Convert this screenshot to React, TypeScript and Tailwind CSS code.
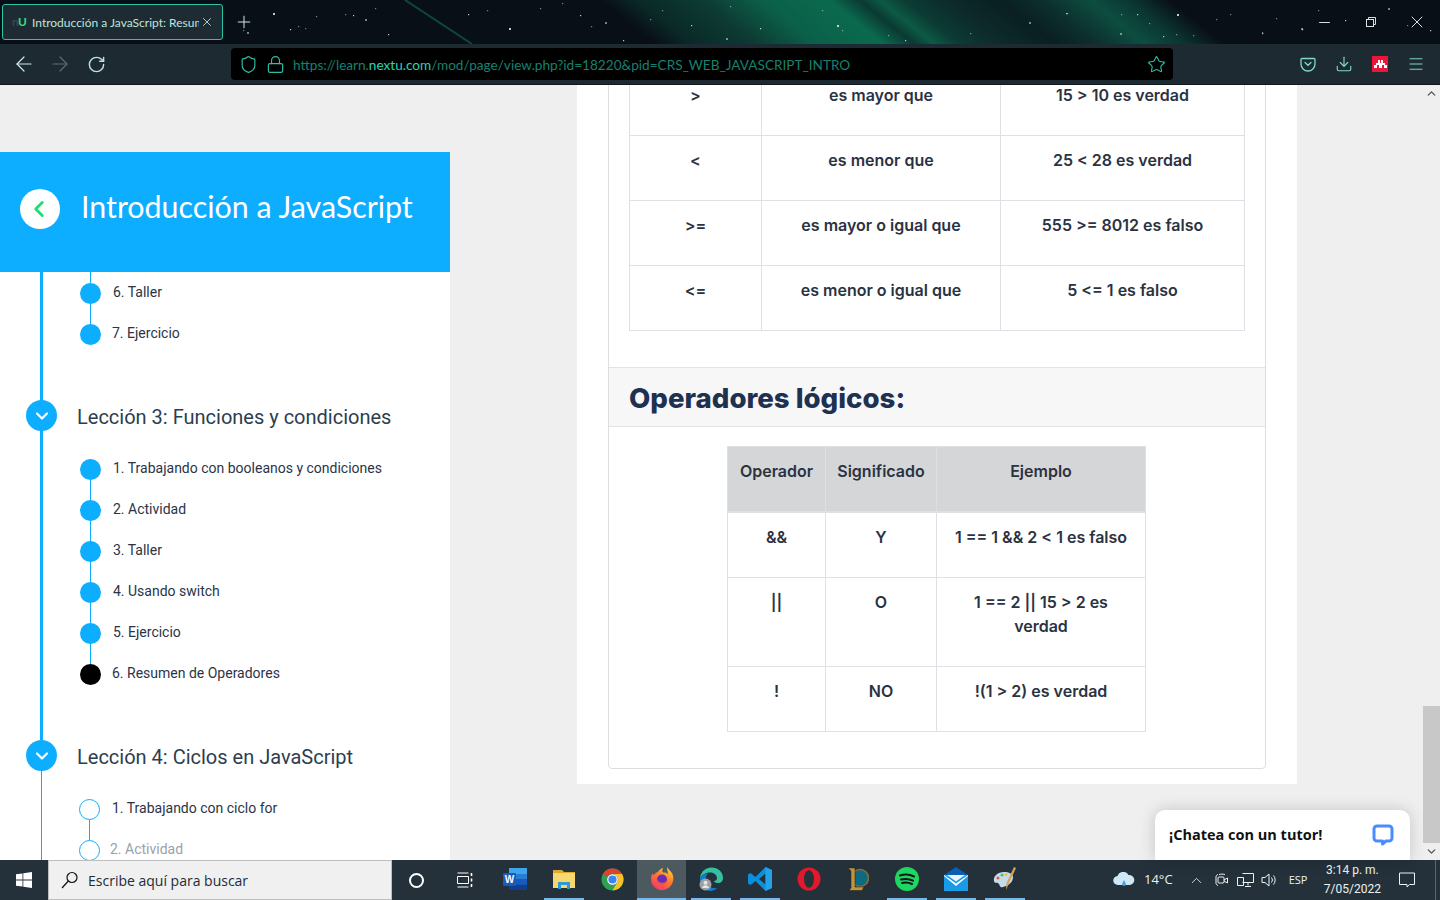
import { ArrowLeft, ArrowRight, ChevronDown, ChevronLeft, ChevronUp, Download, Lock, Menu, Minus, Plus, RotateCw, Shield, Star, X } from "lucide-react";

const stars: number[][] = [
  [273, 13], [316, 16], [345, 14], [353, 15], [375, 8], [365, 19], [290, 29], [298, 26], [305, 28], [388, 34], [247, 32], [243, 30],
  [468, 14], [487, 10], [491, 44], [509, 28], [540, 8], [562, 3], [580, 15], [591, 26], [605, 22], [623, 40], [650, 19], [662, 10],
  [691, 25], [726, 38], [730, 6], [760, 28], [780, 45], [822, 10], [837, 25], [842, 30], [888, 35], [905, 40], [970, 33], [1029, 22],
  [1066, 13], [1067, 13], [1121, 14], [1137, 14], [1120, 33], [1149, 23], [1163, 36], [1176, 34], [1193, 35], [1177, 14], [1216, 19],
  [1230, 14], [1262, 33], [1276, 18], [1301, 28], [1302, 29], [1262, 32], [1318, 10], [1345, 20], [1388, 8], [1407, 25], [1430, 30],
];

const HeaderBackdrop = () => (
  <svg className="absolute inset-0 h-[44px] w-full" viewBox="0 0 1440 44" preserveAspectRatio="none">
    <defs>
      <linearGradient id="band" x1="0" y1="0" x2="1" y2="0">
        <stop offset="0" stopColor="#090f16" />
        <stop offset="0.07" stopColor="#0a2a28" />
        <stop offset="0.175" stopColor="#0d3a33" />
        <stop offset="0.28" stopColor="#0b5f48" />
        <stop offset="0.4" stopColor="#0a6a4e" />
        <stop offset="0.455" stopColor="#0a3a33" />
        <stop offset="0.49" stopColor="#0c5a44" />
        <stop offset="0.535" stopColor="#0b3b34" />
        <stop offset="0.61" stopColor="#0d2a2b" />
        <stop offset="0.7" stopColor="#0a1f22" />
        <stop offset="0.77" stopColor="#0c2e2c" />
        <stop offset="0.86" stopColor="#0d4d40" />
        <stop offset="0.93" stopColor="#0b3531" />
        <stop offset="1" stopColor="#090f16" />
      </linearGradient>
    </defs>
    <rect width="1440" height="44" fill="#090f16" />
    <g transform="skewX(51.3)">
      <rect x="600" y="0" width="570" height="44" fill="url(#band)" />
    </g>
    <line x1="405" y1="0" x2="472" y2="44" stroke="#0b4a3a" strokeWidth="2" />
    {stars.map(([x, y], i) => (
      <rect key={i} x={x} y={y} width={i % 5 === 0 ? 2 : 1.2} height={i % 5 === 0 ? 2 : 1.2} fill="#cfe3e0" opacity={i % 3 === 0 ? 0.9 : 0.55} />
    ))}
  </svg>
);

const PocketIcon = () => (
  <svg width="16" height="16" viewBox="0 0 16 16" fill="none" stroke="#7fd8cc" strokeWidth="1.3">
    <path d="M2 2.5h12a1 1 0 0 1 1 1V8a7 7 0 0 1-14 0V3.5a1 1 0 0 1 1-1Z" />
    <path d="M5 6.5 8 9.3l3-2.8" strokeLinecap="round" />
  </svg>
);

const BrowserChrome = () => (
  <div className="relative shrink-0 h-[85px]">
    <HeaderBackdrop />
    <div className="relative flex h-[44px] items-start">
      <div className="ml-[2px] mt-[4px] flex h-[36px] w-[221px] items-center rounded-[3px] border border-[#2ec4a9] bg-[#1e2b32] pl-[9px]">
        <span className="w-[20px] text-[12px] font-bold leading-none tracking-tighter [font-family:Lato,sans-serif]">
          <span className="text-[#3b4658]">n</span><span className="text-[#2fdc8c]">U</span>
        </span>
        <span className="mt-[1px] w-[167px] overflow-hidden whitespace-nowrap text-[12px] text-[#bfe3de] [font-family:Lato,sans-serif]">Introducción a JavaScript: Resumen</span>
        <X size={14} strokeWidth={1.5} className="ml-[1px] text-[#bfe3de]" />
      </div>
      <Plus size={20} strokeWidth={1.2} className="ml-[11px] mt-[12px] text-[#cfe6e2]" />
      <div className="ml-auto flex h-[44px] items-center text-[#d5e2e0]">
        <Minus size={17} strokeWidth={1.4} className="mr-[33px]" />
        <svg width="10" height="10" viewBox="0 0 10 10" fill="none" stroke="currentColor" className="mr-[31px]">
          <rect x="0.5" y="2.5" width="7" height="7" />
          <path d="M2.5 2.5v-2h7v7h-2" />
        </svg>
        <X size={20} strokeWidth={1.2} className="mr-[13px]" />
      </div>
    </div>
    <div className="relative flex h-[41px] items-center border-b border-[#11181d] bg-[#1e2a31]">
      <ArrowLeft size={24} strokeWidth={1.2} className="ml-[12px] text-[#c9ece6]" />
      <ArrowRight size={24} strokeWidth={1.2} className="ml-[12px] text-[#5b6d70]" />
      <RotateCw size={19} strokeWidth={1.8} className="ml-[15px] text-[#bce6df]" />
      <div className="ml-[125px] flex h-[32px] w-[942px] items-center rounded-[4px] bg-black pl-[8px] pr-[7px]">
        <Shield size={19} strokeWidth={1.5} className="text-[#2ebda6]" />
        <Lock size={19} strokeWidth={1.5} className="ml-[8px] text-[#2ebda6]" />
        <span className="ml-[8px] mt-[2px] whitespace-nowrap text-[13.6px] text-[#16806f] [font-family:Lato,sans-serif]">
          https://learn.<span className="text-[#2dd2b4]">nextu.com</span>/mod/page/view.php?id=18220&amp;pid=CRS_WEB_JAVASCRIPT_INTRO
        </span>
        <Star size={19} strokeWidth={1.4} className="ml-auto text-[#2ebda6]" />
      </div>
      <div className="ml-[127px]"><PocketIcon /></div>
      <Download size={18} strokeWidth={1.5} className="ml-[19px] text-[#7fd8cc]" />
      <div className="ml-[19px] flex h-[16px] w-[16px] items-center justify-center bg-[#e8173a]">
        <svg width="13" height="8" viewBox="0 0 13 8" fill="#fff"><path d="M0 8V5h2V3h2V0h2v3h1V0h2v3h2v2h2v3h-3V5H8v3H5V5H3v3Z" /></svg>
      </div>
      <Menu size={18} strokeWidth={1.3} className="ml-[19px] text-[#7fd8cc]" />
    </div>
  </div>
);

type Lesson = { label: string; kind: "done" | "current" | "todo"; x: string; faded?: boolean };

const Step = ({ item, top, bottom }: { item: Lesson; top: boolean; bottom: boolean }) => {
  const open = item.kind === "todo";
  return (
    <div className="flex h-[41px] shrink-0">
      <div className="flex w-[21px] flex-col items-center">
        <div className={top ? "h-[11px] w-px bg-[#0dadff]" : "h-[11px] w-px"} />
        {item.kind === "done" && <div className="h-[21px] w-[21px] shrink-0 rounded-full bg-[#0dadff]" />}
        {item.kind === "current" && <div className="h-[21px] w-[21px] shrink-0 rounded-full bg-black" />}
        {open && <div className="h-[21px] w-[21px] shrink-0 rounded-full border border-[#0dadff] bg-white" />}
        <div className={bottom ? "h-[9px] w-px bg-[#0dadff]" : "h-[9px] w-px"} />
      </div>
      <span className={`${item.x} h-[41px] whitespace-nowrap text-[14px] leading-[41px] ${item.faded ? "text-[#9aa1ab]" : "text-[#2b3447]"}`}>{item.label}</span>
    </div>
  );
};

const LessonBullet = ({ className }: { className: string }) => (
  <div className={`flex h-[31px] w-[31px] shrink-0 items-center justify-center rounded-full bg-[#0dadff] ${className}`}>
    <ChevronDown size={20} strokeWidth={2.6} className="text-white" />
  </div>
);

const lesson3: Lesson[] = [
  { label: "1. Trabajando con booleanos y condiciones", kind: "done", x: "ml-[12px]" },
  { label: "2. Actividad", kind: "done", x: "ml-[12px]" },
  { label: "3. Taller", kind: "done", x: "ml-[12px]" },
  { label: "4. Usando switch", kind: "done", x: "ml-[12px]" },
  { label: "5. Ejercicio", kind: "done", x: "ml-[12px]" },
  { label: "6. Resumen de Operadores", kind: "current", x: "ml-[11px]" },
];

const Sidebar = () => (
  <div className="flex h-full w-[450px] shrink-0 flex-col">
    <div className="h-[67px] shrink-0" />
    <div className="flex h-[120px] shrink-0 items-center bg-[#0dadff] pb-[8px] pl-[20px]">
      <div className="mt-[2px] flex h-[40px] w-[40px] items-center justify-center rounded-full bg-white">
        <ChevronLeft size={26} strokeWidth={2.6} className="mr-[2px] text-[#1fdc76]" />
      </div>
      <h1 className="-mt-[3px] ml-[21px] whitespace-nowrap text-[30.4px] font-normal leading-none text-white [font-family:Lato,sans-serif]">Introducción a JavaScript</h1>
    </div>
    <div className="min-h-0 flex-1 overflow-hidden bg-white [font-family:Roboto,sans-serif]">
      <div className="ml-[40px] border-l-[3px] border-[#0dadff] pb-[46px]">
        <div className="ml-[37px] flex flex-col">
          <Step item={{ label: "6. Taller", kind: "done", x: "ml-[12px]" }} top bottom />
          <Step item={{ label: "7. Ejercicio", kind: "done", x: "ml-[11px]" }} top={true} bottom={false} />
        </div>
        <div className="mt-[46px] flex h-[31px] items-center">
          <LessonBullet className="-ml-[17px]" />
          <h2 className="ml-[20px] mt-[3px] whitespace-nowrap text-[20px] text-[#2c3e50]">Lección 3: Funciones y condiciones</h2>
        </div>
        <div className="ml-[37px] mt-[17px] flex flex-col">
          {lesson3.map((item, i) => (
            <Step key={item.label} item={item} top={i > 0} bottom={i < lesson3.length - 1} />
          ))}
        </div>
      </div>
      <div className="ml-[41px] border-l border-[#0dadff] pb-[40px]">
        <div className="flex h-[31px] items-center">
          <LessonBullet className="-ml-[16px]" />
          <h2 className="ml-[20px] mt-[3px] whitespace-nowrap text-[20px] text-[#2c3e50]">Lección 4: Ciclos en JavaScript</h2>
        </div>
        <div className="ml-[37px] mt-[17px] flex flex-col">
          <Step item={{ label: "1. Trabajando con ciclo for", kind: "todo", x: "ml-[12px]" }} top={false} bottom />
          <Step item={{ label: "2. Actividad", kind: "todo", x: "ml-[10px]", faded: true }} top bottom={false} />
        </div>
      </div>
    </div>
  </div>
);

const tdClass = "border border-[#dee0e5] pt-[12px] align-top text-center";

const comparisons = [
  [">", "es mayor que", "15 > 10 es verdad"],
  ["<", "es menor que", "25 < 28 es verdad"],
  [">=", "es mayor o igual que", "555 >= 8012 es falso"],
  ["<=", "es menor o igual que", "5 <= 1 es falso"],
];

const logic = [
  { cells: ["&&", "Y", "1 == 1 && 2 < 1 es falso"], h: "h-[66px]" },
  { cells: ["||", "O", "1 == 2 || 15 > 2 es verdad"], h: "h-[89px]" },
  { cells: ["!", "NO", "!(1 > 2) es verdad"], h: "h-[65px]" },
];

const Content = () => (
  <div className="h-full min-w-0 flex-1 overflow-hidden pl-[127px]">
    <div className="-mt-[16px] w-[720px] bg-white pb-[15px] pl-[31px]">
      <div className="w-[658px] rounded-b-[4px] border border-[#dedede] pb-[36px] text-[16px] font-semibold leading-[24px] text-[#2b3242] [font-family:Inter,sans-serif]">
        <table className="ml-[20px] w-[616px] table-fixed border-collapse">
          <colgroup>
            <col className="w-[132px]" />
            <col className="w-[239px]" />
            <col />
          </colgroup>
          <tbody>
            {comparisons.map((row) => (
              <tr key={row[0]} className="h-[65px]">
                {row.map((cell) => (
                  <td key={cell} className={tdClass}>{cell}</td>
                ))}
              </tr>
            ))}
          </tbody>
        </table>
        <div className="mt-[36px] flex h-[60px] items-center border-y border-[#e3e3e3] bg-[#f7f7f7] pl-[20px]">
          <h2 className="mt-[1px] text-[27.6px] font-extrabold text-[#1f3150]">Operadores lógicos:</h2>
        </div>
        <table className="ml-[118px] mt-[19px] w-[419px] table-fixed border-collapse">
          <colgroup>
            <col className="w-[98px]" />
            <col className="w-[111px]" />
            <col />
          </colgroup>
          <thead>
            <tr className="h-[65px] bg-[#d5d6d8]">
              {["Operador", "Significado", "Ejemplo"].map((h) => (
                <th key={h} className="border border-[#dee0e5] border-b-2 pt-[12px] align-top text-center font-semibold">{h}</th>
              ))}
            </tr>
          </thead>
          <tbody>
            {logic.map((row) => (
              <tr key={row.cells[0]} className={row.h}>
                {row.cells.map((cell) => (
                  <td key={cell} className={`${tdClass} px-[14px]`}>{cell}</td>
                ))}
              </tr>
            ))}
          </tbody>
        </table>
      </div>
    </div>
  </div>
);

const Scrollbar = () => (
  <div className="flex h-full w-[17px] shrink-0 flex-col bg-[#efefef]">
    <div className="flex h-[17px] items-center justify-center"><ChevronUp size={13} strokeWidth={2.5} className="text-[#555]" /></div>
    <div className="mt-[604px] h-[137px] bg-[#c8c8c8]" />
    <div className="flex h-[17px] items-center justify-center"><ChevronDown size={13} strokeWidth={2.5} className="text-[#555]" /></div>
  </div>
);

const ChatWidget = () => (
  <div className="absolute bottom-0 left-[1155px] flex h-[50px] w-[255px] items-center rounded-t-[10px] bg-white pl-[14px] pr-[16px] shadow-[0_0_16px_rgba(0,0,0,0.18)]">
    <span className="text-[14.5px] font-bold text-[#111] [font-family:'Open_Sans',sans-serif]">¡Chatea con un tutor!</span>
    <svg width="22" height="22" viewBox="0 0 22 22" fill="none" className="ml-auto">
      <path d="M5 2h12a3 3 0 0 1 3 3v9a3 3 0 0 1-3 3h-3l-3.5 3v-3H5a3 3 0 0 1-3-3V5a3 3 0 0 1 3-3Z" stroke="#4a8cff" strokeWidth="3" strokeLinejoin="round" />
    </svg>
  </div>
);

const Word = () => (
  <svg width="24" height="22" viewBox="0 0 24 22">
    <rect x="6" y="0" width="18" height="22" rx="1.5" fill="#2b7cd3" />
    <rect x="6" y="0" width="18" height="6" fill="#41a5ee" />
    <rect x="6" y="11" width="18" height="5.5" fill="#185abd" />
    <rect x="6" y="16.5" width="18" height="5.5" fill="#103f91" />
    <rect x="0" y="5" width="13" height="13" rx="1" fill="#185abd" />
    <text x="6.5" y="15" textAnchor="middle" fontSize="10" fontWeight="700" fill="#fff" fontFamily="Liberation Sans, sans-serif">W</text>
  </svg>
);
const Explorer = () => (
  <svg width="22" height="20" viewBox="0 0 22 20">
    <path d="M0 1h9l2 2h11v16H0Z" fill="#e0a92d" />
    <rect x="0" y="4" width="22" height="15" fill="#f7d770" />
    <path d="M5 20v-7h12v7h-3v-4H8v4Z" fill="#2c9ad8" />
  </svg>
);
const Chrome = () => (
  <svg width="23" height="23" viewBox="0 0 24 24">
    <circle cx="12" cy="12" r="11.500" fill="#2fa04f" />
    <path d="M2 6.300A11.500 11.500 0 0 1 22 6.300H12a5.700 5.700 0 0 0-5 3Z" fill="#e0412f" />
    <path d="M22 6.300A11.500 11.500 0 0 1 12 23.500L17 14.800A5.700 5.700 0 0 0 17 9 5.700 5.700 0 0 0 12 6.300Z" fill="#f7c02c" />
    <circle cx="12" cy="12" r="5.500" fill="#fff" />
    <circle cx="12" cy="12" r="4.300" fill="#3e84f1" />
  </svg>
);
const Firefox = () => (
  <svg width="24" height="24" viewBox="0 0 24 24">
    <defs>
      <linearGradient id="ff" x1="0.8" y1="0" x2="0.2" y2="1">
        <stop offset="0" stopColor="#ffd23a" />
        <stop offset="0.45" stopColor="#ff7a2b" />
        <stop offset="1" stopColor="#f0336f" />
      </linearGradient>
    </defs>
    <path d="M17 0c1 2 4 4 5.500 7 1.500 4 1 8-1.500 11.500A11 11 0 0 1 1 12c0-2 .5-4 1.500-5.500L4 8c1-2 3-3 4-3 1-2 3-3.500 5-4-1 2-1 3.500 0 4.500 2 0 4 0 5 2 0-2.500-1-5-1-7.500Z" fill="url(#ff)" />
    <circle cx="12" cy="12.500" r="5" fill="#6a2bb8" />
    <path d="M7 12c1 3 4 4.500 7 3.500 2-.5 3-2 3.500-3.500-.5 3-3 6-6.500 5.500C8.500 17 7 14.500 7 12Z" fill="#f4553f" />
  </svg>
);
const Edge = () => (
  <svg width="24" height="24" viewBox="0 0 24 24">
    <path d="M1 11C2 4 7 .5 12.500.5 19 .5 24 5 24 11c0 3-2 5-5 5-2.500 0-4-1-4-2 2 0 3-1 3-3 0-3-3-5.500-6.500-5.500C6 5.500 3 8 1 11Z" fill="#35c1a0" />
    <path d="M1 11c2-3 5-4.500 8-4.500-1.500 1.500-2.500 3.500-2.500 6 0 5 5 10 12 8.500A11.500 11.500 0 0 1 12 24C5 24 .5 18 1 11Z" fill="#0f7fd0" />
    <circle cx="6.500" cy="17.500" r="6" fill="#9aa0a4" />
    <circle cx="6.500" cy="15.800" r="2" fill="#e7e7e7" />
    <path d="M3 21c.5-2 2-2.800 3.500-2.800S9.500 19 10 21Z" fill="#e7e7e7" />
  </svg>
);
const VSCode = () => (
  <svg width="24" height="24" viewBox="0 0 24 24">
    <path d="M17.500 0 24 3v18l-6.500 3L7.500 14l-5 4L0 16.500v-9L2.500 6l5 4ZM17.500 6.500 11 12l6.500 5.500Z" fill="#0a8fdc" />
    <path d="M17.500 0 24 3v18l-6.500 3Z" fill="#2aa6ec" opacity="0.8" />
  </svg>
);
const Opera = () => (
  <svg width="24" height="24" viewBox="0 0 24 24">
    <circle cx="12" cy="12" r="11.500" fill="#e0192c" />
    <ellipse cx="12" cy="12" rx="5" ry="8.800" fill="#24323a" />
  </svg>
);
const LeagueIcon = () => (
  <svg width="22" height="24" viewBox="0 0 22 24">
    <circle cx="13" cy="11" r="8.500" fill="#0d6a80" stroke="#8a6d3b" strokeWidth="1.500" />
    <path d="M1 1h7v19h9l-2 3.500H2l2-2.500V4Z" fill="#c0953f" stroke="#1c1c1c" strokeWidth="0.500" />
  </svg>
);
const Spotify = () => (
  <svg width="24" height="24" viewBox="0 0 24 24" fill="none">
    <circle cx="12" cy="12" r="12" fill="#1ed760" />
    <path d="M5 8.500c4.500-1.300 10-1 14 1M6 12.500c4-1 8.500-.7 12 1.200M7 16c3.500-.8 7-.5 10 1" stroke="#11171a" strokeWidth="2" strokeLinecap="round" />
  </svg>
);
const Mail = () => (
  <svg width="24" height="24" viewBox="0 0 24 24">
    <path d="M0 8 12 0l12 8v3H0Z" fill="#0a5fb5" />
    <rect x="0" y="8" width="24" height="16" fill="#1a9be8" />
    <path d="M0 8l12 8.500L24 8v1L12 19 0 9Z" fill="#fff" />
    <path d="M3 8h18L12 14.500Z" fill="#e9f4fb" />
  </svg>
);
const Paint = () => (
  <svg width="24" height="24" viewBox="0 0 24 24">
    <path d="M11 5C5 5 0 9 1 14c.5 3 4 1 5 3s1 4 4 3c6-1.500 10-5 10-10 0-3-4-5-9-5Z" fill="#c7dcea" />
    <circle cx="5" cy="11" r="1.500" fill="#e2574c" />
    <circle cx="9" cy="8" r="1.500" fill="#5cb85c" />
    <circle cx="13" cy="7.500" r="1.500" fill="#f0c23c" />
    <path d="M21 0l2 1-7 15-3 7 .5-7Z" fill="#d8a25a" />
  </svg>
);

const TaskSlot = ({ children, running, active, className }: { children: React.ReactNode; running?: boolean; active?: boolean; className?: string }) => (
  <div className={`flex h-full w-[49px] shrink-0 flex-col items-center ${active ? "bg-[#4c5a60]" : ""} ${className ?? ""}`}>
    <div className="flex min-h-0 flex-1 items-center justify-center">{children}</div>
    <div className={`h-[2px] ${active ? "w-full" : "w-[40px]"} ${running ? "bg-[#76b9ed]" : ""}`} />
  </div>
);

const Taskbar = () => (
  <div className="flex h-[40px] shrink-0 items-center bg-[#24313a] text-white [font-family:'Open_Sans',sans-serif]">
    <div className="flex h-full w-[48px] shrink-0 items-center justify-center">
      <svg width="16" height="16" viewBox="0 0 16 16" fill="#fff">
        <path d="M0 2.300 6.500 1.400V7.600H0ZM7.300 1.300 16 0V7.600H7.300ZM0 8.400H6.500V14.600L0 13.700ZM7.300 8.400H16V16L7.300 14.700Z" />
      </svg>
    </div>
    <div className="flex h-full w-[344px] shrink-0 items-center border border-[#bdbdbd] bg-[#f0f0f0] pl-[12px] text-[14px] text-[#222c3a]">
      <svg width="18" height="18" viewBox="0 0 18 18" fill="none" stroke="#111" strokeWidth="1.200">
        <circle cx="11" cy="6.500" r="5" />
        <path d="M7.300 10 1 17" />
      </svg>
      <span className="ml-[9px] whitespace-nowrap">Escribe aquí para buscar</span>
    </div>
    <div className="flex h-full w-[48px] shrink-0 items-center justify-center">
      <div className="h-[15px] w-[15px] rounded-full border-2 border-white" />
    </div>
    <div className="flex h-full w-[50px] shrink-0 items-center justify-center">
      <svg width="16" height="16" viewBox="0 0 16 16" fill="none" stroke="#fff">
        <path d="M.5 1h11M.5 15h11M.5 4.500h11v7H.5Z" />
        <path d="M14.500 1v3M14.500 6.500v3M14.500 12v3" strokeWidth="1.600" />
      </svg>
    </div>
    <TaskSlot><Word /></TaskSlot>
    <TaskSlot running><Explorer /></TaskSlot>
    <TaskSlot><Chrome /></TaskSlot>
    <TaskSlot running active><Firefox /></TaskSlot>
    <TaskSlot running><Edge /></TaskSlot>
    <TaskSlot running><VSCode /></TaskSlot>
    <TaskSlot><Opera /></TaskSlot>
    <TaskSlot><LeagueIcon /></TaskSlot>
    <TaskSlot running><Spotify /></TaskSlot>
    <TaskSlot running><Mail /></TaskSlot>
    <TaskSlot running><Paint /></TaskSlot>
    <div className="ml-[84px] flex h-full flex-1 items-center text-[#eef1f2]">
      <svg width="22" height="16" viewBox="0 0 22 16" fill="#cfe7f7">
        <path d="M5 13a4.500 4.500 0 0 1-.5-9A6 6 0 0 1 15.500 3 5 5 0 0 1 17 13Z" />
        <path d="M11 8l2 4a2 2 0 0 1-4 0Z" fill="#4aa3e0" />
      </svg>
      <span className="ml-[9px] text-[13px]">14°C</span>
      <ChevronUp size={17} strokeWidth={1.200} className="ml-[15px]" />
      <svg width="14" height="16" viewBox="0 0 14 16" fill="none" stroke="currentColor" className="ml-[10px]">
        <path d="M3 2.500C1.500 3 1 4 1 5v6c0 1 .5 2 2 2.500M10 2.500c-1-.5-5-.5-6 0" />
        <rect x="3" y="5" width="6" height="6" rx="1" />
        <path d="M9 8l3.500-2v5L9 9" />
      </svg>
      <svg width="17" height="16" viewBox="0 0 17 16" fill="none" stroke="currentColor" className="ml-[8px]">
        <path d="M5.500 1.500h11v9h-11M.5 5.500h6v8h-6ZM11 10.500v3M8 14.500h6" />
      </svg>
      <svg width="17" height="16" viewBox="0 0 17 16" fill="none" stroke="currentColor" className="ml-[7px]">
        <path d="M1 5.500h3L8 2v12L4 10.500H1ZM10.500 5.500a4 4 0 0 1 0 5M12.500 3.500a7 7 0 0 1 0 9" />
      </svg>
      <span className="ml-[11px] text-[11px]">ESP</span>
      <div className="ml-[12px] flex w-[66px] flex-col items-center text-[12px] leading-[17px] [font-family:Roboto,sans-serif]">
        <span className="whitespace-nowrap">3:14 p. m.</span>
        <span className="mt-[2px] whitespace-nowrap">7/05/2022</span>
      </div>
      <svg width="16" height="16" viewBox="0 0 16 16" fill="none" stroke="currentColor" className="ml-[14px]">
        <path d="M.5 1h15v11.500h-5l-2.500 2.500v-2.500H.5Z" />
      </svg>
      <div className="ml-auto mr-[4px] h-full w-px bg-[#5a6870]" />
    </div>
  </div>
);

export default function App() {
  return (
    <div className="relative flex h-[900px] w-[1440px] flex-col overflow-hidden bg-[#efefef]">
      <BrowserChrome />
      <div className="relative flex min-h-0 flex-1">
        <Sidebar />
        <Content />
        <Scrollbar />
        <ChatWidget />
      </div>
      <Taskbar />
    </div>
  );
}
